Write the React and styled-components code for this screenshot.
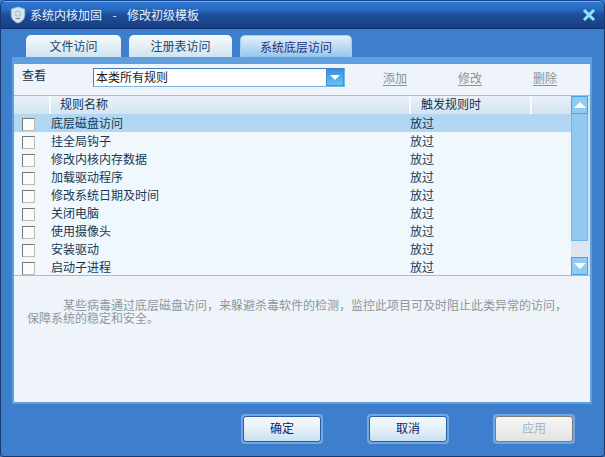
import React from "react";
import styled, { createGlobalStyle } from "styled-components";

const Global = createGlobalStyle`
  html, body { margin: 0; padding: 0; background: #3d7fcd; }
  * { box-sizing: border-box; }
`;

const cjk = `"Noto Sans CJK SC", "Liberation Sans", sans-serif`;

const Win = styled.div`
  width: 605px;
  height: 457px;
  display: flex;
  flex-direction: column;
  background: #3d7fcd;
  border: 1px solid #163a70;
  border-top-color: #1b4a90;
  border-radius: 6px 6px 4px 4px;
  font-family: ${cjk};
  font-size: 12px;
  overflow: hidden;
`;

const TitleBar = styled.div`
  height: 28px;
  flex: none;
  display: flex;
  align-items: center;
  padding: 0 8px 0 9px;
  color: #e6f2fb;
  background: linear-gradient(#2f79d6 0, #2768bf 30%, #1c4d99 50%, #193f83 100%);
  border-top: 1px solid #55b4f2;
  border-bottom: 1px solid #0f2f6c;
`;

const TitleText = styled.span`
  margin-left: 4px;
  padding-bottom: 2px;
  white-space: pre;
  word-spacing: 2.5px;
`;

const Close = styled.svg`
  margin-left: auto;
`;

const Tabs = styled.div`
  display: flex;
  gap: 8px;
  padding: 6px 0 0 25px;
  height: 28px;
  flex: none;
`;

const Tab = styled.div`
  width: ${(p) => p.$w}px;
  height: 23px;
  padding-bottom: 2px;
  display: flex;
  align-items: center;
  justify-content: center;
  border-radius: 5px 5px 0 0;
  color: ${(p) => (p.$active ? "#2b2f78" : "#17466e")};
  background: ${(p) =>
    p.$active
      ? "linear-gradient(#e4f1fa, #8fc4ec)"
      : "linear-gradient(#f7fbfd, #cfe2f0)"};
  border: ${(p) => (p.$active ? "1px solid #9fd0f0" : "none")};
  border-bottom: none;
`;

const Panel = styled.div`
  width: 580px;
  height: 347px;
  margin-left: 11px;
  flex: none;
  padding: 7px 2px 2px;
  background: #5f9fde;
`;

const Inner = styled.div`
  height: 100%;
  display: flex;
  flex-direction: column;
  background: #eef4f9;
`;

const Toolbar = styled.div`
  height: 31px;
  flex: none;
  display: flex;
  align-items: flex-start;
  padding: 4px 0 0 8px;
  color: #14304e;
`;

const ViewLabel = styled.span`
  width: 71px;
  margin-top: -2px;
  line-height: 17px;
`;

const Select = styled.div`
  width: 252px;
  height: 19px;
  display: flex;
  background: #fff;
  border: 1px solid #7cb6e6;
  border-left-color: #3f7fc0;
  border-top-color: #3f7fc0;
  padding-left: 2px;
  line-height: 15px;
  color: #1a1a1a;
`;

const SelectArrow = styled.div`
  margin-left: auto;
  width: 18px;
  height: 17px;
  display: flex;
  align-items: center;
  justify-content: center;
  background: linear-gradient(#3f90dc, #63c2f2);
  border: 1px solid #4c8ccb;
`;

const Action = styled.span`
  position: relative;
  top: 1px;
  margin-left: ${(p) => p.$ml}px;
  color: #8b9298;
  text-decoration: underline;
  text-decoration-skip-ink: none;
  text-underline-offset: 2px;
  line-height: 17px;
`;

const Table = styled.div`
  height: 181px;
  flex: none;
  position: relative;
  overflow: hidden;
  border-top: 1px solid #8cc6e6;
  border-bottom: 1px solid #8cc6e6;
  background: #f1f8fd;
`;

const HeadRow = styled.div`
  height: 18px;
  display: grid;
  grid-template-columns: 35px 360px 121px 1fr;
  background: linear-gradient(#eaf1f9, #d4e3f2);
  color: #14304e;
  line-height: 16px;
`;

const HeadCell = styled.div`
  padding-left: ${(p) => p.$pad || 0}px;
  border-left: ${(p) => (p.$first ? "none" : "2px solid #f7fbff")};
`;

const Row = styled.div`
  height: 18px;
  display: grid;
  grid-template-columns: 37px 359px 1fr;
  align-items: center;
  padding-right: 18px;
  color: #143a56;
  background: ${(p) => (p.$selected ? "#b1d7f3" : "transparent")};
`;

const Cell = styled.span`
  padding-bottom: 2px;
`;

const Check = styled.div`
  width: 13px;
  height: 13px;
  margin: 2px 0 0 8px;
  background: #fbfbf9;
  border: 1px solid #bcbcb8;
  border-top-color: #777;
  border-left-color: #777;
`;

const ScrollBar = styled.div`
  position: absolute;
  right: 0;
  top: 0;
  bottom: 0;
  width: 19px;
  display: flex;
  flex-direction: column;
  background: #dde6f0;
  padding-right: 2px;
`;

const ScrollBtn = styled.div`
  height: 18px;
  flex: none;
  display: flex;
  align-items: center;
  justify-content: center;
  background: #8fcbf2;
  border: 1px solid #48a3e4;
`;

const ScrollThumb = styled.div`
  height: 127px;
  flex: none;
  background: #91c9f1;
  border: 1px solid #6fb6ec;
  border-top: none;
`;

const ScrollTrack = styled.div`
  flex: 1;
`;

const Desc = styled.div`
  padding: 22px 20px 0 13px;
  color: #8f979d;
  line-height: 13px;
  font-size: 12px;
  text-indent: 36px;
`;

const Footer = styled.div`
  flex: 1;
  display: flex;
  gap: 44px;
  padding: 10px 0 0 240px;
`;

const BtnFrame = styled.div`
  width: 82px;
  height: 30px;
  padding: 2px;
  border-radius: 4px;
  background: #74a6e3;
`;

const Btn = styled.div`
  height: 100%;
  padding-bottom: 4px;
  display: flex;
  align-items: center;
  justify-content: center;
  border-radius: 3px;
  color: ${(p) => (p.$disabled ? "#9db5cb" : "#11206b")};
  font-size: 12px;
  background: ${(p) =>
    p.$disabled
      ? "linear-gradient(#f6f6f5, #e3e3e1)"
      : "linear-gradient(#f4f9fc 0, #e9f3f9 40%, #c9e1f1 100%)"};
  border: 1px solid ${(p) => (p.$disabled ? "#7d7d78" : "#2a5e9e")};
`;

const rules = [
  "底层磁盘访问",
  "挂全局钩子",
  "修改内核内存数据",
  "加载驱动程序",
  "修改系统日期及时间",
  "关闭电脑",
  "使用摄像头",
  "安装驱动",
  "启动子进程",
];

const Triangle = ({ down, w = 12, h = 6 }) => (
  <svg width={w} height={h} viewBox="0 0 12 6">
    <path d={down ? "M0 0h12L6 6z" : "M0 6h12L6 0z"} fill="#fff" />
  </svg>
);

const Shield = () => (
  <svg width="16" height="18" viewBox="0 0 17 20">
    <path d="M8.5 1 16 3.500V10c0 4.500-3.500 7.500-7.500 9C4.500 17.500 1 14.500 1 10V3.500z" fill="#d5e4ee" stroke="#9dbad2" />
    <circle cx="8.500" cy="8.500" r="3.500" fill="#a8c4da" />
    <path d="M4 13.500c2.500 1.500 6.500 1.500 9 0M8.500 5.500v6M5.500 8.500h6" stroke="#f3f8fb" />
  </svg>
);

const App = () => (
  <>
    <Global />
    <Win>
      <TitleBar>
        <Shield />
        <TitleText>系统内核加固  -  修改初级模板</TitleText>
        <Close width="14" height="14" viewBox="0 0 14 14">
          <path d="M2 2l10 10M12 2 2 12" stroke="#8fe6fa" strokeWidth="3" />
        </Close>
      </TitleBar>
      <Tabs>
        <Tab $w={95}>文件访问</Tab>
        <Tab $w={103}>注册表访问</Tab>
        <Tab $w={112} $active>系统底层访问</Tab>
      </Tabs>
      <Panel>
        <Inner>
          <Toolbar>
            <ViewLabel>查看</ViewLabel>
            <Select>
              本类所有规则
              <SelectArrow><Triangle down w={10} h={5} /></SelectArrow>
            </Select>
            <Action $ml={38}>添加</Action>
            <Action $ml={51}>修改</Action>
            <Action $ml={51}>删除</Action>
          </Toolbar>
          <Table>
            <HeadRow>
              <HeadCell $first />
              <HeadCell $pad={9}>规则名称</HeadCell>
              <HeadCell $pad={10}>触发规则时</HeadCell>
              <HeadCell />
            </HeadRow>
            {rules.map((name, i) => (
              <Row key={name} $selected={i === 0}>
                <Check />
                <Cell>{name}</Cell>
                <Cell>放过</Cell>
              </Row>
            ))}
            <ScrollBar>
              <ScrollBtn><Triangle /></ScrollBtn>
              <ScrollThumb />
              <ScrollTrack />
              <ScrollBtn><Triangle down /></ScrollBtn>
            </ScrollBar>
          </Table>
          <Desc>
            某些病毒通过底层磁盘访问，来躲避杀毒软件的检测，监控此项目可及时阻止此类异常的访问，保障系统的稳定和安全。
          </Desc>
        </Inner>
      </Panel>
      <Footer>
        <BtnFrame><Btn>确定</Btn></BtnFrame>
        <BtnFrame><Btn>取消</Btn></BtnFrame>
        <BtnFrame><Btn $disabled>应用</Btn></BtnFrame>
      </Footer>
    </Win>
  </>
);

export default App;
